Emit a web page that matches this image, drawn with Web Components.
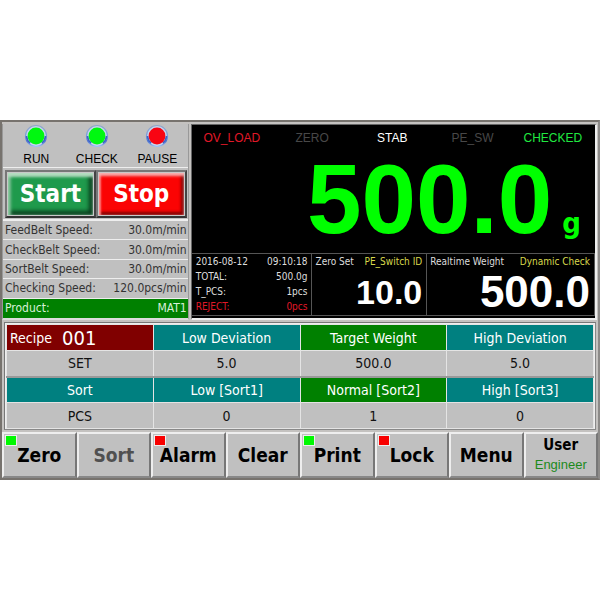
<!DOCTYPE html>
<html lang="en">
<head>
<meta charset="utf-8">
<meta name="viewport" content="width=device-width, initial-scale=1">
<title>Checkweigher</title>
<style>
  body { margin: 0; min-height: 100vh; display: flex; align-items: center; background: #fff; }
  weigher-app { flex: 1; min-width: 0; }
</style>
</head>
<body>
<weigher-app></weigher-app>
<script>
const UI = '"DejaVu Sans Condensed", "DejaVu Sans", sans-serif';
const ARIAL = '"Liberation Sans", Arial, sans-serif';

class Base extends HTMLElement {
  connectedCallback() {
    if (this.shadowRoot) return;
    this.attachShadow({ mode: 'open' }).innerHTML =
      `<style>*{box-sizing:border-box}:host{box-sizing:border-box}${this.css()}</style>${this.html()}`;
  }
  a(name) { return this.getAttribute(name) || ''; }
}

customElements.define('status-lamp', class extends Base {
  css() { return `
    :host { display: flex; flex-direction: column; align-items: center; font: 12px/14px ${ARIAL}; color: #000; }
    svg { width: 24px; height: 24px; margin-bottom: 4px; display: block; }`; }
  html() { return `
    <svg viewBox="0 0 24 24" aria-hidden="true">
      <defs><linearGradient id="r" x1="0" y1="0" x2="0" y2="1">
        <stop offset="0" stop-color="#8fa6c8"/><stop offset=".5" stop-color="#7c9cdc"/><stop offset=".75" stop-color="#4a70d0"/><stop offset="1" stop-color="#9cc0f4"/>
      </linearGradient></defs>
      <circle cx="12" cy="12" r="10.5" fill="#c6d6ee" stroke="url(#r)" stroke-width="1.2"/>
      <path d="M2.5 12a9.5 9.5 0 0 0 3.600 7M21.5 12a9.5 9.5 0 0 1 -3.600 7" fill="none" stroke="#3c62c4" stroke-width="1.6"/>
      <circle cx="12" cy="12" r="8.4" fill="${this.a('color')}"/>
    </svg><span><slot></slot></span>`; }
});

customElements.define('power-button', class extends Base {
  css() { return `
    :host { display: flex; min-width: 0; }
    button { flex: 1; min-width: 0; padding: 0; border: 2px solid; border-color: #777 #444 #333 #777;
      background: #c8c8c8; display: flex; }
    span { flex: 1; margin: 1px; display: flex; align-items: center; justify-content: center;
      font: bold 24px/28px ${UI}; color: #fff; }
    .go { background: #1f9a4c; box-shadow: inset 0 4px 3px #b4dcc0, inset 3px 0 3px #78bd90, inset -4px -4px 4px #07381a; }
    .halt { background: #fb0404; box-shadow: inset 0 3px 3px #f7b0b0, inset 2px 0 2px #ff7070, inset -3px -3px 3px #7c0000; }`; }
  html() { return `<button type="button"><span class="${this.a('kind')}"><slot></slot></span></button>`; }
});

customElements.define('speed-row', class extends Base {
  css() { return `
    :host { display: flex; justify-content: space-between; align-items: center; padding: 1px 1px 0 2px;
      font: 12px/17px ${UI}; color: #333; border-bottom: 1px solid #eee; }
    :host([active]) { background: #008000; color: #d8f0d8; border-bottom: 0; }
    span { white-space: nowrap; }`; }
  html() { return `<span>${this.a('label')}</span><span><slot></slot></span>`; }
});

customElements.define('control-panel', class extends Base {
  css() { return `
    :host { display: grid; grid-template-rows: 43px 52px 1fr; background: #c0c0c0; border: 1px solid #999; border-width: 0 1px 2px 1px; border-bottom-color: #ddd; }
    .lamps { display: grid; grid-template-columns: repeat(3, 1fr); padding-left: 3px; }
    .power { display: grid; grid-template-columns: 1fr 1fr; padding: 2px 1px 1px 2px; border-top: 1px solid #eee; }
    .rows { display: grid; grid-template-rows: repeat(5, 1fr); border-top: 2px solid #eee; }`; }
  html() { return `
    <div class="lamps"><status-lamp color="#00f810">RUN</status-lamp><status-lamp color="#00f810">CHECK</status-lamp><status-lamp color="#f80412">PAUSE</status-lamp></div>
    <div class="power"><power-button kind="go">Start</power-button><power-button kind="halt">Stop</power-button></div>
    <div class="rows">
      <speed-row label="FeedBelt Speed:">30.0m/min</speed-row>
      <speed-row label="CheckBelt Speed:">30.0m/min</speed-row>
      <speed-row label="SortBelt Speed:">30.0m/min</speed-row>
      <speed-row label="Checking Speed:">120.0pcs/min</speed-row>
      <speed-row label="Product:" active>MAT1</speed-row>
    </div>`; }
});

customElements.define('read-out', class extends Base {
  css() { return `
    :host { display: flex; flex-direction: column; padding: 1px 4px 0 3px; border-left: 1px solid #555;
      font: 10px/14px ${UI}; color: #ddd; min-width: 0; }
    .top { display: flex; justify-content: space-between; white-space: nowrap; }
    .note { color: #d8d84c; }
    .value { flex: 1; display: flex; align-items: center; justify-content: flex-end; font: bold 34px/40px ${ARIAL}; color: #fff; }
    :host([large]) .value { font-size: 44px; line-height: 44px; }`; }
  html() { return `<div class="top"><span>${this.a('label')}</span><span class="note">${this.a('note')}</span></div><div class="value"><slot></slot></div>`; }
});

customElements.define('weight-display', class extends Base {
  css() { return `
    :host { display: flex; flex-direction: column; background: #000; border: 1px solid #666; border-right: 2px solid #eee; border-bottom: 2px solid #eee; }
    .flags { display: grid; grid-template-columns: repeat(5, 1fr); text-align: center; padding: 6px 2px 0 0; font: 12px/14px ${ARIAL}; color: #484848; }
    .red { color: #e01828; } .white { color: #fff; } .green { color: #20e840; }
    .main { flex: 1; display: flex; align-items: baseline; justify-content: flex-end; padding-right: 14px; gap: 10px;
      color: #00ff00; font: bold 98px/108px ${ARIAL}; }
    .unit { font: bold 29px/32px ${UI}; }
    .bottom { display: grid; grid-template-columns: 120fr 115fr 168fr; height: 63px; margin-bottom: 2px;
      border: 1px solid #555; border-left: 0; }
    dl { margin: 0; padding: 0 4px; display: grid; grid-template-rows: repeat(4, 1fr); font: 10px/14px ${UI}; color: #ddd; }
    dl div { display: flex; justify-content: space-between; align-items: center; }
    dd { margin: 0; }`; }
  html() { return `
    <div class="flags"><span class="red">OV_LOAD</span><span>ZERO</span><span class="white">STAB</span><span>PE_SW</span><span class="green">CHECKED</span></div>
    <div class="main"><span>500.0</span><span class="unit">g</span></div>
    <div class="bottom">
      <dl>
        <div><dt>2016-08-12</dt><dd>09:10:18</dd></div>
        <div><dt>TOTAL:</dt><dd>500.0g</dd></div>
        <div><dt>T_PCS:</dt><dd>1pcs</dd></div>
        <div class="red"><dt>REJECT:</dt><dd>0pcs</dd></div>
      </dl>
      <read-out label="Zero Set" note="PE_Switch ID">10.0</read-out>
      <read-out label="Realtime Weight" note="Dynamic Check" large>500.0</read-out>
    </div>`; }
});

customElements.define('recipe-table', class extends Base {
  css() { return `
    :host { display: block; border: 1px solid #777; border-right-color: #888; border-bottom-color: #888; background: #eee; padding: 1px 1px 0; }
    table { width: 100%; table-layout: fixed; border-collapse: collapse; font: 14px/18px ${UI}; color: #111; }
    th, td { height: 26px; padding: 0; text-align: center; font-weight: normal; border: 1px solid #e4e4e4; background: #c0c0c0; }
    thead th, .head th { background: #008080; color: #fff; }
    .head th.mid, thead th.mid { background: #008000; }
    thead th.recipe { background: #800000; }
    .head th { border-top: 2px solid #999; }
    .pair { display: flex; align-items: center; gap: 10px; padding-left: 3px; }
    .pair b { font: 20px/22px ${UI}; }`; }
  html() { return `<table>
    <thead><tr><th class="recipe"><div class="pair"><span>Recipe</span><b>001</b></div></th><th>Low Deviation</th><th class="mid">Target Weight</th><th>High Deviation</th></tr></thead>
    <tbody>
      <tr><th>SET</th><td>5.0</td><td>500.0</td><td>5.0</td></tr>
      <tr class="head"><th>Sort</th><th>Low [Sort1]</th><th class="mid">Normal [Sort2]</th><th>High [Sort3]</th></tr>
      <tr><th>PCS</th><td>0</td><td>1</td><td>0</td></tr>
    </tbody></table>`; }
});

customElements.define('menu-button', class extends Base {
  css() { return `
    :host { display: flex; min-width: 0; }
    button { flex: 1; min-width: 0; position: relative; padding: 0; background: #c0c0c0; color: #000;
      border: 2px solid; border-color: #eee #777 #888 #eee; font: bold 19px/22px ${UI}; }
    button:disabled { color: #505050; }
    i { position: absolute; left: 1px; top: 1px; width: 12px; height: 11px; border: 1px solid #eee; background: var(--lamp); }
    .two { font-size: 15px; line-height: 20px; }
    small { display: block; font: 13px/20px ${ARIAL}; color: #1c8a1c; }`; }
  html() {
    const lamp = this.a('lamp'), sub = this.a('sub');
    return `<button type="button" class="${sub ? 'two' : ''}" ${this.hasAttribute('off') ? 'disabled' : ''}>
      ${lamp ? `<i style="--lamp:${lamp}"></i>` : ''}<slot></slot>${sub ? `<small>${sub}</small>` : ''}</button>`;
  }
});

customElements.define('weigher-app', class extends Base {
  css() { return `
    :host { display: flex; flex-direction: column; gap: 3px; background: #c4c2c0; border: 2px solid #77736e; border-right-color: #8c8a88; padding: 2px 0 0 0; }
    .upper { display: grid; grid-template-columns: 187fr 407fr; gap: 2px; height: 195px; padding-right: 1px; }
    recipe-table { margin: 0 2px; }
    nav { display: grid; grid-template-columns: repeat(8, 1fr); height: 46px; margin-top: -1px; }`; }
  html() { return `
    <div class="upper"><control-panel></control-panel><weight-display></weight-display></div>
    <recipe-table></recipe-table>
    <nav>
      <menu-button lamp="#00f800">Zero</menu-button><menu-button off>Sort</menu-button>
      <menu-button lamp="#f80000">Alarm</menu-button><menu-button>Clear</menu-button>
      <menu-button lamp="#00f800">Print</menu-button><menu-button lamp="#f80000">Lock</menu-button>
      <menu-button>Menu</menu-button><menu-button sub="Engineer">User</menu-button>
    </nav>`; }
});
</script>
</body>
</html>
